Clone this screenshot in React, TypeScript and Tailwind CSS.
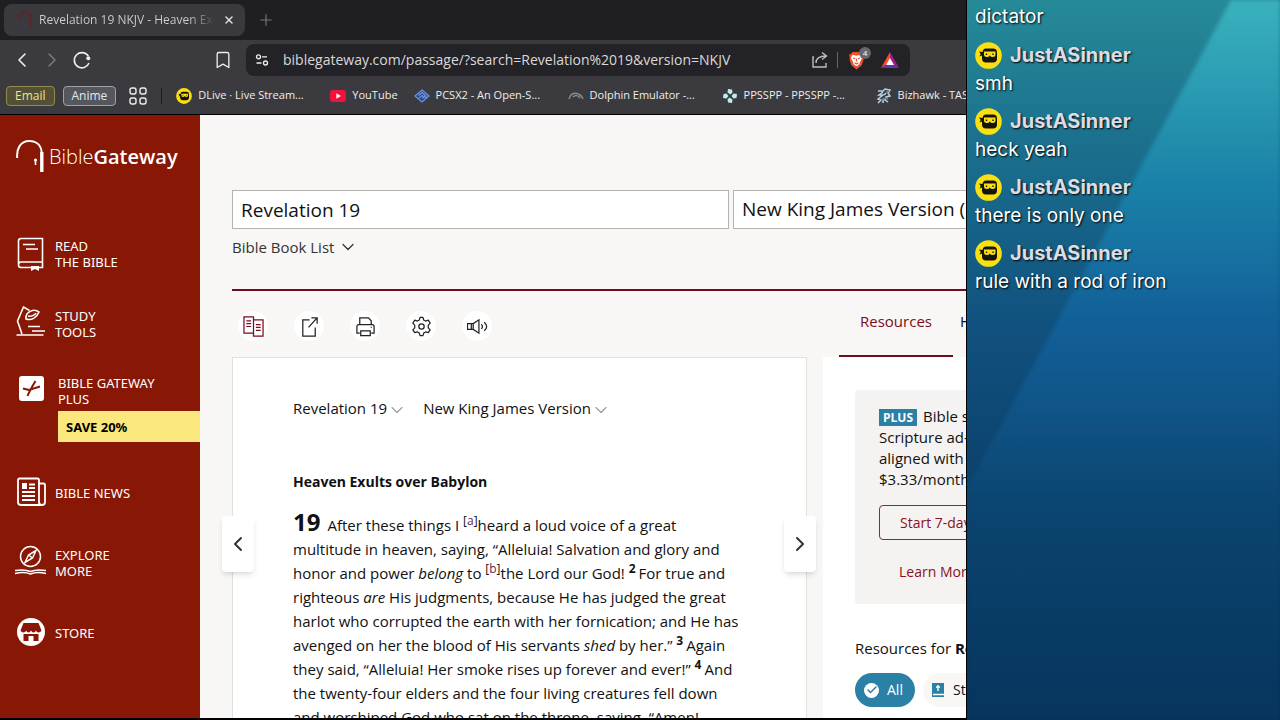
// App.tsx
import { useState } from "react";
import type { ReactNode } from "react";
import { Bookmark, Check, ChevronDown, ChevronLeft, ChevronRight, Plus, X } from "lucide-react";

const BOOKMARKS = [
  { label: "DLive · Live Stream...", long: true, icon: <DliveIcon className="size-4" /> },
  { label: "YouTube", long: false, icon: <YoutubeIcon /> },
  { label: "PCSX2 - An Open-S...", long: true, icon: <PcsxIcon /> },
  { label: "Dolphin Emulator -...", long: true, icon: <DolphinIcon /> },
  { label: "PPSSPP - PPSSPP -...", long: true, icon: <PpssppIcon /> },
  { label: "Bizhawk - TASVideos", long: true, icon: <BizhawkIcon /> },
];

const MESSAGES = ["smh", "heck yeah", "there is only one", "rule with a rod of iron"];

export default function App() {
  return (
    <div className="flex h-screen overflow-hidden bg-black font-['Open_Sans','Noto_Sans',sans-serif] text-[#111]">
      <div className="flex min-w-0 flex-1 flex-col overflow-hidden border-r border-b-2 border-black">
        <BrowserChrome />
        <div className="flex min-h-0 flex-1 overflow-hidden">
          <SideNav />
          <PassagePage />
        </div>
      </div>
      <ChatPanel />
    </div>
  );
}

function BrowserChrome() {
  const [url, setUrl] = useState("biblegateway.com/passage/?search=Revelation%2019&version=NKJV");

  return (
    <header className="shrink-0 border-b border-black bg-[#3b3b3f] text-[#eeeeee]">
      <div className="flex h-10 items-center bg-[#1f1e23] px-1">
        <div className="flex h-8 w-[241px] items-center rounded-lg bg-[#3a3a3e] pr-[10px] pl-3">
          <svg viewBox="0 0 20 20" className="size-5 shrink-0" fill="none" stroke="#5e2529" strokeWidth="2">
            <path d="M3 10V8a6 6 0 0 1 12 0v9" />
          </svg>
          <span className="ml-[3px] flex-1 overflow-hidden bg-linear-to-r from-[#d0d0d2] from-85% to-[#3a3a3e] bg-clip-text text-xs whitespace-nowrap text-transparent">
            Revelation 19 NKJV - Heaven Exults
          </span>
          <button type="button" aria-label="Close tab" className="ml-2">
            <X className="size-3 text-[#dddddd]" strokeWidth={3} />
          </button>
        </div>
        <button type="button" aria-label="New tab" className="ml-3">
          <Plus className="size-[18px] text-[#77777b]" strokeWidth={1.500} />
        </button>
      </div>

      <div className="flex h-10 items-center pl-[10px]">
        <button type="button" aria-label="Back"><ChevronLeft className="size-6" strokeWidth={1.600} /></button>
        <button type="button" aria-label="Forward" className="ml-[6px] text-[#77777b]"><ChevronRight className="size-6" strokeWidth={1.600} /></button>
        <button type="button" aria-label="Reload" className="ml-2">
          <svg viewBox="0 0 20 20" className="size-5" fill="none" stroke="currentColor" strokeWidth="1.6">
            <path d="M16.4 6.2A7.6 7.6 0 1 0 17 13" />
            <circle cx="16.3" cy="8.2" r="2" fill="currentColor" stroke="none" />
          </svg>
        </button>
        <button type="button" aria-label="Bookmark this tab" className="ml-[121px]"><Bookmark className="size-5" strokeWidth={1.6} /></button>
        <div className="ml-[13px] flex h-8 w-[664px] items-center rounded-lg bg-[#232327] px-2">
          <svg viewBox="0 0 16 16" className="size-4" fill="none" stroke="currentColor" strokeWidth="1.3">
            <circle cx="4.5" cy="4.8" r="2" />
            <circle cx="11.5" cy="11" r="2" />
            <path d="M8 4.8h5M2.5 11h5" />
          </svg>
          <input
            aria-label="Address"
            value={url}
            onChange={(e) => setUrl(e.target.value)}
            className="ml-[13px] min-w-0 flex-1 bg-transparent text-sm text-[#d8d8da] outline-none"
          />
          <button type="button" aria-label="Share">
            <svg viewBox="0 0 18 18" className="size-[18px]" fill="none" stroke="#bdbdc1" strokeWidth="1.4">
              <path d="M3 6H2v10h13v-4M5 12c0-5 4-7 10-7M11 1.500l4.500 3.500L11 8.500" />
            </svg>
          </button>
          <span className="ml-2 h-4 w-px shrink-0 bg-[#66666a]" />
          <button type="button" aria-label="Shields" className="relative ml-[10px]">
            <svg viewBox="0 0 18 20" className="h-[19px] w-[17px]">
              <path d="M5 1h8l2 2 2 1-1 3 .500 2-2 6L9 19.500 3.500 15l-2-6L2 7 1 4l2-1z" fill="#f0502c" />
              <path d="M5 4l4 1 4-1 2 3-2 4-1 3-3 2-3-2-1-3-2-4z" fill="#fff" />
              <path d="M5.500 7.500l2 .700M12.500 7.500l-2 .700M9 8v3M7 12.500l2 1 2-1" stroke="#f0502c" strokeWidth="1.200" fill="none" />
            </svg>
            <span className="absolute -top-1 -right-[6px] flex size-3 items-center justify-center rounded-full bg-[#66676f] text-[8px] leading-none text-white">4</span>
          </button>
          <button type="button" aria-label="Rewards" className="mr-[3px] ml-4">
            <svg viewBox="0 0 18 16" className="h-4 w-[18px]">
              <path d="M9 0 0 16 9 10z" fill="#ff4a24" />
              <path d="M9 0l9 16-9-6z" fill="#a02087" />
              <path d="M0 16h18L9 10z" fill="#6c2fae" />
              <path d="M9 6l4 7H5z" fill="#fff" />
            </svg>
          </button>
        </div>
      </div>

      <nav aria-label="Bookmarks" className="flex h-[34px] items-center overflow-hidden pb-[3px] pl-[6px] text-xs whitespace-nowrap">
        <a href="#" className="flex h-5 shrink-0 items-center rounded-sm border border-[#968b50] bg-[#545037] px-2 text-[#f0e488]">Email</a>
        <a href="#" className="ml-2 flex h-5 shrink-0 items-center rounded-sm border border-[#9da0a6] bg-[#54575d] px-2 text-[#e6e8ec]">Anime</a>
        <svg viewBox="0 0 18 18" className="ml-[13px] size-[18px] shrink-0" fill="none" stroke="currentColor" strokeWidth="1.400">
          <rect x="1" y="1" width="6" height="6" rx="2" />
          <rect x="11" y="1" width="6" height="6" rx="2" />
          <rect x="1" y="11" width="6" height="6" rx="2" />
          <rect x="11" y="11" width="6" height="6" rx="2" />
        </svg>
        <span className="mx-[14px] h-4 w-px shrink-0 bg-[#1f1e23]" />
        <div className="flex gap-4 text-[11px]">
          {BOOKMARKS.map((b) => (
            <a key={b.label} href="#" className="flex shrink-0 items-center gap-[6px]">
              {b.icon}
              <span className={b.long ? "w-[116px]" : undefined}>{b.label}</span>
            </a>
          ))}
        </div>
      </nav>
    </header>
  );
}

function SideNav() {
  return (
    <aside className="w-[200px] shrink-0 bg-[#881705] font-['Noto_Sans',sans-serif] text-[13px] leading-4 text-white">
      <a href="#" className="flex items-center pt-6 pl-4 font-['Open_Sans',sans-serif]">
        <svg viewBox="0 0 29 34" className="h-[34px] w-[29px]" fill="none" stroke="#fff">
          <path d="M1.200 19c-.800-9 3-17 12-17 8 0 12.500 5 12.500 13" strokeWidth="2" />
          <path d="M25.800 13v20" strokeWidth="3.400" />
          <circle cx="19.500" cy="21" r="1.600" fill="#fff" stroke="none" />
          <path d="M19.500 21v5" strokeWidth="1.600" />
        </svg>
        <span className="ml-1 pt-[2px] text-xl leading-8 font-light">Bible<b className="font-semibold">Gateway</b></span>
      </a>

      <ul className="mt-[65px] flex flex-col gap-[38px]">
        <NavItem icon={<BookIcon />}>READ<br />THE BIBLE</NavItem>
        <NavItem icon={<LampIcon />}>STUDY<br />TOOLS</NavItem>
      </ul>

      <div className="mt-[35px] flex pl-[18px]">
        <svg viewBox="0 0 27 27" className="size-[27px]">
          <rect x="1" y="1" width="25" height="25" rx="3" fill="#fff" />
          <path d="M9.500 21c2-5 5-10 8-15M5 13.500l6 1.500 11-3.500" fill="none" stroke="#881705" strokeWidth="2" />
        </svg>
        <div className="ml-[13px] flex-1">
          <a href="#" className="block">BIBLE GATEWAY<br />PLUS</a>
          <a href="#" className="mt-1 flex h-[31px] items-center bg-[#fae87e] pl-2 font-bold text-black">SAVE 20%</a>
        </div>
      </div>

      <ul className="mt-[35px] flex flex-col gap-[38px]">
        <NavItem icon={<NewsIcon />}>BIBLE NEWS</NavItem>
        <NavItem icon={<CompassIcon />}>EXPLORE<br />MORE</NavItem>
        <NavItem icon={<StoreIcon />}>STORE</NavItem>
      </ul>
    </aside>
  );
}

function NavItem({ icon, children }: { icon: ReactNode; children: ReactNode }) {
  return (
    <li>
      <a href="#" className="flex h-8 items-center gap-2 pl-[14px]">
        {icon}
        <span>{children}</span>
      </a>
    </li>
  );
}

function PassagePage() {
  const [query, setQuery] = useState("Revelation 19");

  return (
    <main className="min-w-0 flex-1 overflow-hidden bg-[#f8f7f6] pl-8">
      <form className="flex gap-1 pt-[75px]" onSubmit={(e) => e.preventDefault()}>
        <input
          aria-label="Passage"
          value={query}
          onChange={(e) => setQuery(e.target.value)}
          className="h-[39px] w-[497px] shrink-0 border border-[#b4b3ae] bg-white px-2 text-[19px] outline-none"
        />
        <select aria-label="Version" className="h-[39px] w-[420px] shrink-0 appearance-none border border-[#b4b3ae] bg-white px-2 text-[19px] outline-none">
          <option>New King James Version (NKJV)</option>
        </select>
      </form>
      <button type="button" className="mt-[6px] flex items-center gap-1 text-[15px] leading-6 text-[#333]">
        Bible Book List
        <ChevronDown className="size-5" strokeWidth={1.500} />
      </button>
      <div className="mt-[30px] h-[2px] bg-[#6e0d1c]" />

      <div className="flex items-start gap-4">
        <div className="w-[575px] shrink-0">
          <div className="flex h-[66px] items-center gap-[26px] pt-1 pl-[6px]">
            <ToolButton label="Parallel">
              <g stroke="#7a0c1e">
                <path d="M1 1h10v17H1zM11 4h10v17H11z" />
                <path d="M3.500 5h5M3.500 8h5M3.500 11h5M13.500 9h5M13.500 12h5M13.500 15h5" />
              </g>
            </ToolButton>
            <ToolButton label="Open">
              <path d="M11 4H4v17h13v-9M10 12l8.500-9.500M13 2h6v6" />
            </ToolButton>
            <ToolButton label="Print">
              <path d="M5 9V2h9l3 3v4M5 18H2v-7a2 2 0 0 1 2-2h14a2 2 0 0 1 2 2v7h-3M6 15.500h10v5H6zM16.500 12h1" />
            </ToolButton>
            <ToolButton label="Settings">
              <path d="M9.500 1.500h3l.8 2.700 2 1.100 2.800-.9 2 3-2 2.100v2.900l2 2.100-2 3-2.800-.8-2 1.200-.8 2.600h-3l-.8-2.600-2-1.200-2.800.8-2-3 2-2.100V9.500l-2-2.100 2-3 2.800.9 2-1.100z" strokeLinejoin="round" />
              <circle cx="11" cy="11" r="2.800" />
            </ToolButton>
            <ToolButton label="Listen">
              <path d="M.500 8h4v6h-4zM4.500 8h2M4.500 14h2M6.500 8l6-4v14l-6-4zM15 8.500c1.500 1.600 1.500 3.400 0 5M18 6.500c3.500 3 3.500 6 0 9" />
            </ToolButton>
          </div>

          <section className="relative h-[520px] border border-[#e2e1de] bg-white px-[60px] pt-[38px]">
            <div className="flex gap-4 text-[15px] leading-6">
              <button type="button" className="flex items-center">Revelation 19<ChevronDown className="mt-1 size-5 text-[#999]" strokeWidth={1.300} /></button>
              <button type="button" className="flex items-center">New King James Version<ChevronDown className="mt-1 size-5 text-[#999]" strokeWidth={1.300} /></button>
            </div>
            <h3 className="mt-[50px] text-sm leading-6 font-bold">Heaven Exults over Babylon</h3>
            <p className="mt-4 text-[15px] leading-6 whitespace-nowrap">
              <b className="mr-[7px] text-2xl leading-6">19</b>After these things I <Note>a</Note>heard a loud voice of a great<br />
              multitude in heaven, saying, “Alleluia! Salvation and glory and<br />
              honor and power <i>belong</i> to <Note>b</Note>the Lord our God! <Verse>2</Verse>For true and<br />
              righteous <i>are</i> His judgments, because He has judged the great<br />
              harlot who corrupted the earth with her fornication; and He has<br />
              avenged on her the blood of His servants <i>shed</i> by her.” <Verse>3</Verse>Again<br />
              they said, “Alleluia! Her smoke rises up forever and ever!” <Verse>4</Verse>And<br />
              the twenty-four elders and the four living creatures fell down<br />
              and worshiped God who sat on the throne, saying, “Amen!
            </p>
            <button type="button" aria-label="Previous chapter" className="absolute top-[158px] -left-[11px] flex h-14 w-8 items-center justify-center rounded-sm bg-white shadow-md">
              <ChevronLeft className="size-6 text-[#333]" strokeWidth={2} />
            </button>
            <button type="button" aria-label="Next chapter" className="absolute top-[158px] -right-[10px] flex h-14 w-8 items-center justify-center rounded-sm bg-white shadow-md">
              <ChevronRight className="size-6 text-[#333]" strokeWidth={2} />
            </button>
          </section>
        </div>

        <div className="w-[340px] shrink-0 text-[15px]">
          <div className="flex h-[66px] items-end pl-4">
            <a href="#" className="flex h-[66px] w-[114px] items-center justify-center border-b-2 border-[#6e0d1c] pb-1 text-[#7a0c1e]">Resources</a>
            <a href="#" className="flex h-[66px] items-center pb-[6px] pl-[7px]">Hub</a>
          </div>
          <section className="h-[520px] bg-white px-8 pt-[33px]">
            <div className="h-[214px] rounded-sm bg-[#f5f3f1] px-6 pt-4">
              <p className="leading-[21px] whitespace-nowrap">
                <span className="mr-[6px] inline-block bg-[#2a81a5] px-1 text-xs leading-[17px] font-bold text-white">PLUS</span>Bible study tools<br />
                Scripture ad-free, and<br />
                aligned with your goals<br />
                $3.33/month
              </p>
              <button type="button" className="mt-[15px] flex h-[35px] w-[228px] items-center rounded-sm border border-[#8a2a38] pl-5 text-sm text-[#8a1020]">Start 7-day free trial</button>
              <a href="#" className="mt-5 block pl-5 text-sm leading-6 text-[#8a1020]">Learn More</a>
            </div>
            <p className="mt-8 leading-6 whitespace-nowrap">Resources for <b>Revelation 19</b></p>
            <div className="mt-[13px] flex gap-2 text-sm">
              <button type="button" className="flex h-[34px] w-[60px] items-center gap-2 rounded-full bg-[#2a81a5] pl-[9px] text-white">
                <span className="flex size-[15px] items-center justify-center rounded-full bg-white">
                  <Check className="size-3 text-[#2a81a5]" strokeWidth={3} />
                </span>
                All
              </button>
              <button type="button" className="flex h-[34px] items-center gap-2 rounded-full bg-[#f8f7f6] px-2">
                <svg viewBox="0 0 14 16" className="h-4 w-[14px]">
                  <path d="M1 1h12v14H1z" fill="#2a81a5" />
                  <path d="M7 3v6M5 5h4M2 12.500h11" stroke="#fff" strokeWidth="1.400" />
                </svg>
                Study Bibles
              </button>
            </div>
          </section>
        </div>
      </div>
    </main>
  );
}

function ToolButton({ label, children }: { label: string; children: ReactNode }) {
  return (
    <button type="button" aria-label={label} className="flex size-[30px] items-center justify-center rounded-full bg-white">
      <svg viewBox="0 0 22 22" className="size-[21px]" fill="none" stroke="#222" strokeWidth="1.300">{children}</svg>
    </button>
  );
}

function Note({ children }: { children: ReactNode }) {
  return <sup className="text-xs leading-none">[<a href="#" className="text-[#5a2a50]">{children}</a>]</sup>;
}

function Verse({ children }: { children: ReactNode }) {
  return <sup className="mr-[3px] text-xs leading-none font-bold">{children}</sup>;
}

function ChatPanel() {
  return (
    <aside className="relative w-[313px] shrink-0 overflow-hidden bg-linear-to-b from-[#268a98] via-[#11517f] via-45% to-[#052c51] font-['Inter',sans-serif] text-[19px] leading-6 text-white [text-shadow:1px_1px_2px_#000]">
      {/* soft light ray falling from the top right corner */}
      <div className="absolute inset-0 blur-[2px]">
        <div className="size-full bg-[linear-gradient(to_bottom,#3fbcc6cc,#1c8db6b3_25%,#1468a899_45%,#0f5c8f33_70%,#0f5c8f33)] [clip-path:polygon(264px_0,100%_0,100%_100%,0_100%,0_488px)]" />
      </div>
      <div className="relative px-2 pt-[5px]">
        <p>dictator</p>
        <ul className="mt-3 flex flex-col gap-[11px]">
          {MESSAGES.map((text) => (
            <li key={text}>
              <div className="flex h-7 items-center gap-2">
                <DliveIcon className="size-[27px]" />
                <b className="text-xl leading-7 font-bold text-[#dcdce4]">JustASinner</b>
              </div>
              <p className="mt-[3px]">{text}</p>
            </li>
          ))}
        </ul>
      </div>
    </aside>
  );
}

function DliveIcon({ className }: { className: string }) {
  return (
    <svg viewBox="0 0 27 27" className={className}>
      <circle cx="13.500" cy="13.500" r="13.300" fill="#fbe00f" />
      <path d="M11 6.500h7q4 0 4 4v6q0 4-4 4h-7q-4 0-4-4v-3l-2.500 1 1.200-2.500L4 9.500l3.500.500q.500-3.500 3.500-3.500z" fill="#16140a" />
      <path d="M9 9.500h11.500v3q0 2.500-3 2.500-1.800 0-2.700-1.500-1 1.500-2.800 1.500-3 0-3-2.500z" fill="#fbe00f" />
      <path d="M11.500 11.500v1.500M18 11.500v1.500" stroke="#16140a" strokeWidth="1.400" />
    </svg>
  );
}

function YoutubeIcon() {
  return (
    <svg viewBox="0 0 16 12" className="h-3 w-4">
      <rect width="16" height="12" rx="3" fill="#f0113c" />
      <path d="M6.300 3.300v5.400L11 6z" fill="#fff" />
    </svg>
  );
}

function PcsxIcon() {
  return (
    <svg viewBox="0 0 16 14" className="h-[14px] w-4" fill="none" stroke="#6b92e6" strokeWidth="1.300">
      <path d="M8 1l7 6-7 6-7-6z" fill="#2d4478" />
      <path d="M4.500 6.500 8 3.500l3.500 3L8 9.500M5 9l3-2.500 2 1.500M11 9.500l1.500-2" />
    </svg>
  );
}

function DolphinIcon() {
  return (
    <svg viewBox="0 0 16 10" className="h-[10px] w-4" fill="none" stroke="#8a8b8f" strokeWidth="1.500">
      <path d="M1 8C2 3 6 1.500 9 2.500S14 5 15 8M5 6c2-2 5-2 7 1" />
    </svg>
  );
}

function PpssppIcon() {
  return (
    <svg viewBox="0 0 16 16" className="size-4" fill="#bfeaf0">
      <path d="M6 1l4 .500.500 3L8.500 6.500 5.500 4.500zM10 15l-4-.500-.500-3 2-2 3 2zM1 10l.500-4 3-.500 2 2.500-2 2.500zM15 6l-.500 4-3 .500-2-2.500 2-2.500z" />
    </svg>
  );
}

function BizhawkIcon() {
  return (
    <svg viewBox="0 0 16 16" className="size-4" fill="none" stroke="#b9d3de" strokeWidth="1.500">
      <path d="M2 3h5l2-2 5 1-2 3 2 3-4 1-1 3 3 2M7 4 3 7h4l-5 4 3 1-3 3M8 7l2-2M7 11v4" />
      <path d="M10 4l3-1M5 13l3-3M9 10l3 1" stroke="#5f8598" />
    </svg>
  );
}

function BookIcon() {
  return (
    <svg viewBox="0 0 33 36" className="h-9 w-[33px] shrink-0" fill="none" stroke="#fff" strokeWidth="1.600">
      <path d="M4.500 29V5q0-2.500 2.500-2.500h21.500v29H7q-2.500 0-2.500-2.500 0-3 2.500-3h21.500M9 8.500h12M12 13h12" />
      <path d="M17 30h8v5l-4-2-4 2z" fill="#fff" stroke="none" />
    </svg>
  );
}

function LampIcon() {
  return (
    <svg viewBox="0 0 33 36" className="h-9 w-[33px] shrink-0" fill="none" stroke="#fff" strokeWidth="1.600">
      <path d="M2.500 29h27M8 28 3.500 15 9.500 1l6 3.500M14 20.500h12M18 25h13" />
      <path d="M12 13c-1-7 8-11 13-7-2 5-7 9-13 7zM14 10c3 1 7-1 8-3" />
    </svg>
  );
}

function NewsIcon() {
  return (
    <svg viewBox="0 0 33 36" className="h-9 w-[33px] shrink-0" fill="none" stroke="#fff" strokeWidth="1.800">
      <path d="M25 28.500V5q0-1.500-1.500-1.500h-18Q4 3.500 4 5v22q0 3 3 3h21q3 0 3-3V10q0-1.500-1.500-1.500H25V27q0 3 3 3M15 9.500h6M15 13h6M8 17h13M8 21h13M8 25h13" />
      <path d="M8 8h5v6H8z" fill="#fff" stroke="none" />
    </svg>
  );
}

function CompassIcon() {
  return (
    <svg viewBox="0 0 33 36" className="h-9 w-[33px] shrink-0" fill="none" stroke="#fff" strokeWidth="1.500">
      <circle cx="16.500" cy="11.500" r="10" />
      <path d="M11 17.500l3.500-7.500L22 5.500l-3.500 7.500zM14.500 10l4 3" />
      <path d="M1 25.500c6-1 11-1 15.500 1 4.500-2 9.500-2 15.500-1M1 28.500c6-1.500 11-1.500 15.500.500 4.500-2 9.500-2 15.500-.500" />
    </svg>
  );
}

function StoreIcon() {
  return (
    <svg viewBox="0 0 33 36" className="h-9 w-[33px] shrink-0">
      <circle cx="17" cy="17" r="14" fill="#fff" />
      <path d="M9.500 8h15l3 7.500q-1 2-3 2-2 0-2.500-2-1 2-2.500 2t-2.500-2q-1 2-2.500 2t-2.500-2q-.500 2-2.500 2t-3-2z" fill="#881705" />
      <path d="M9.500 19h15v7h-5v-5h-5v5h-5z" fill="#881705" />
    </svg>
  );
}
